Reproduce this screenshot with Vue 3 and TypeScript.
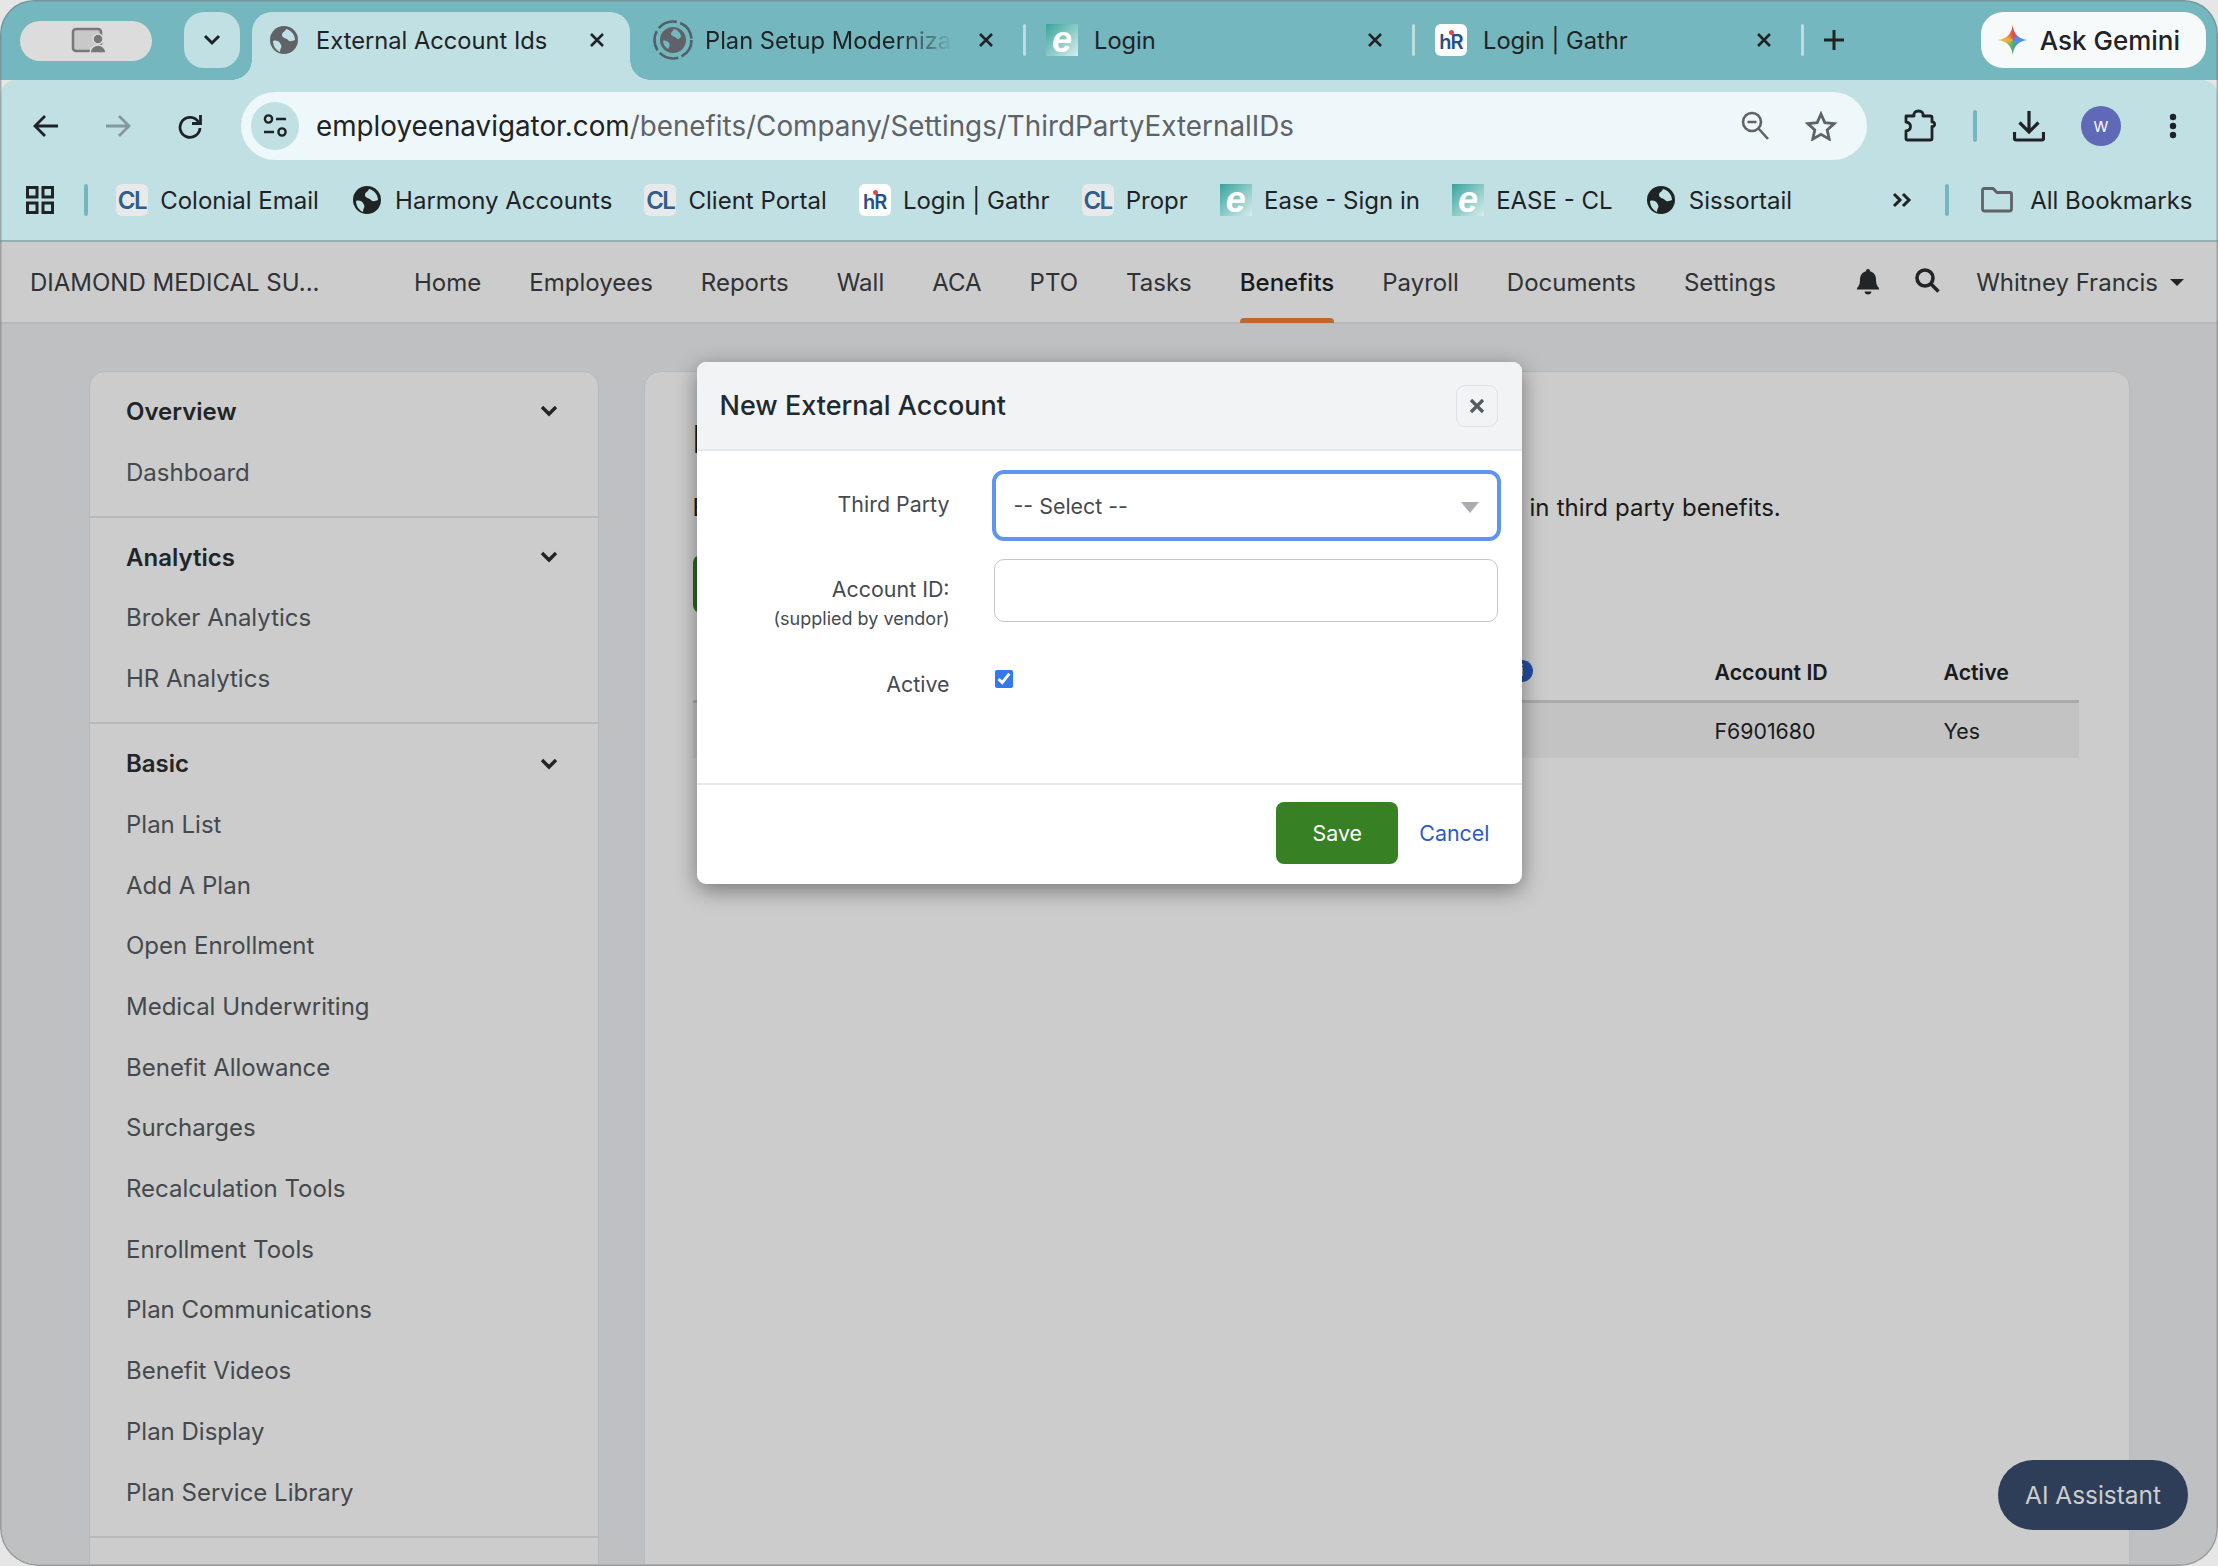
<script setup lang="ts">
type IconKind = 'globe' | 'ring' | 'cl' | 'hr' | 'ease'

interface BrowserTab {
  title: string
  icon: IconKind
  active?: boolean
  fade?: boolean
  sep?: boolean
}

interface Bookmark {
  title: string
  icon: IconKind
}

interface SideSection {
  title: string
  items: string[]
}

const tabs: BrowserTab[] = [
  { title: 'External Account Ids', icon: 'globe', active: true },
  { title: 'Plan Setup Modernization', icon: 'ring', fade: true, sep: true },
  { title: 'Login', icon: 'ease', sep: true },
  { title: 'Login | Gathr', icon: 'hr', sep: true },
]

const bookmarks: Bookmark[] = [
  { title: 'Colonial Email', icon: 'cl' },
  { title: 'Harmony Accounts', icon: 'globe' },
  { title: 'Client Portal', icon: 'cl' },
  { title: 'Login | Gathr', icon: 'hr' },
  { title: 'Propr', icon: 'cl' },
  { title: 'Ease - Sign in', icon: 'ease' },
  { title: 'EASE - CL', icon: 'ease' },
  { title: 'Sissortail', icon: 'globe' },
]

const navItems = ['Home', 'Employees', 'Reports', 'Wall', 'ACA', 'PTO', 'Tasks', 'Benefits', 'Payroll', 'Documents', 'Settings']

const sections: SideSection[] = [
  { title: 'Overview', items: ['Dashboard'] },
  { title: 'Analytics', items: ['Broker Analytics', 'HR Analytics'] },
  {
    title: 'Basic',
    items: [
      'Plan List',
      'Add A Plan',
      'Open Enrollment',
      'Medical Underwriting',
      'Benefit Allowance',
      'Surcharges',
      'Recalculation Tools',
      'Enrollment Tools',
      'Plan Communications',
      'Benefit Videos',
      'Plan Display',
      'Plan Service Library',
    ],
  },
]
</script>

<template>
  <div class="window">
    <!-- tab strip -->
    <header class="tabstrip">
      <div class="profile-pill">
        <svg class="pill-icon" width="36" height="28" viewBox="0 0 36 28" fill="none">
          <rect x="2" y="2" width="28" height="22" rx="3" fill="#c8c8c8" stroke="#777" stroke-width="2.5" />
          <circle cx="27" cy="12" r="5" fill="#777" stroke="#dcdcdc" stroke-width="1.5" />
          <path d="M19 26c0-5 4-8 8-8s8 3 8 8z" fill="#777" stroke="#dcdcdc" stroke-width="1.5" />
        </svg>
      </div>
      <div class="tab-search">
        <svg width="18" height="12" viewBox="0 0 18 12" fill="none"><path d="M2 2l7 7 7-7" stroke="#1f2325" stroke-width="3" /></svg>
      </div>
      <div class="tabs">
        <template v-for="tab in tabs" :key="tab.title">
          <div class="tab" :class="{ 'tab--active': tab.active }">
            <span class="fav">
              <svg v-if="tab.icon === 'globe'" width="28" height="28" viewBox="0 0 28 28">
                <circle cx="14" cy="14" r="14" fill="#5f6368" />
                <path d="M16 3c-1 3-4 3-4 6s4 3 6 5 4 1 7 0c0-5-4-10-9-11zM3 15c3-1 6 0 7 2s2 3 1 5-1 3-1 4c-4-2-7-6-7-11z" fill="#c1e0e3" />
              </svg>
              <svg v-else-if="tab.icon === 'ring'" class="ring" width="40" height="40" viewBox="0 0 40 40">
                <circle cx="20" cy="20" r="18.5" fill="none" stroke="#4f6268" stroke-width="2.6" stroke-dasharray="20 3.5" />
                <circle cx="20" cy="20" r="13" fill="#5f6368" />
                <path d="M21 9c-1 2-3 3-3 5s3 2 5 4 3 1 5-1c0-4-3-7-7-8zM10 21c2-1 5 0 6 2s1 2 0 4l-1 2c-3-2-5-5-5-8z" fill="#74b7bf" />
              </svg>
              <span v-else-if="tab.icon === 'ease'" class="logo logo--ease">e</span>
              <span v-else class="logo logo--hr">hR<i class="hr-dot" /></span>
            </span>
            <span class="tab-title" :class="{ 'tab-title--fade': tab.fade }">{{ tab.title }}</span>
            <svg class="tab-close" width="16" height="16" viewBox="0 0 16 16" fill="none">
              <path d="M2 2l12 12M14 2L2 14" stroke="#1f2325" stroke-width="2.6" />
            </svg>
          </div>
          <span v-if="tab.sep" class="tab-sep" />
        </template>
      </div>
      <svg class="tab-plus" width="22" height="22" viewBox="0 0 22 22" fill="none">
        <path d="M11 1v20M1 11h20" stroke="#1f2325" stroke-width="3" />
      </svg>
      <div class="gemini">
        <span class="gemini-star" />
        <span>Ask Gemini</span>
      </div>
    </header>

    <!-- address bar -->
    <div class="toolbar">
      <svg width="26" height="24" viewBox="0 0 26 24" fill="none">
        <path d="M25 12H3M12 2L2 12l10 10" stroke="#1f2325" stroke-width="2.8" />
      </svg>
      <svg class="tool-fwd" width="26" height="24" viewBox="0 0 26 24" fill="none">
        <path d="M1 12h22M14 2l10 10-10 10" stroke="#84989d" stroke-width="2.8" />
      </svg>
      <svg class="tool-reload" width="26" height="26" viewBox="0 0 26 26" fill="none">
        <path d="M21.5 9A10 10 0 1 0 23 15" stroke="#1f2325" stroke-width="2.8" />
        <path d="M23.5 2v8.5H15" stroke="#1f2325" stroke-width="2.8" />
      </svg>
      <div class="omnibox">
        <span class="site-chip">
          <svg width="24" height="24" viewBox="0 0 24 24" fill="none" stroke="#1f2325" stroke-width="2.4">
            <circle cx="5.5" cy="5" r="3.6" />
            <path d="M13 5h10M1 18h10" />
            <circle cx="19" cy="18" r="3.6" />
          </svg>
        </span>
        <span class="url"><b>employeenavigator.com</b>/benefits/Company/Settings/ThirdPartyExternalIDs</span>
        <svg class="omni-zoom" width="28" height="30" viewBox="0 0 28 30" fill="none" stroke="#5f6368" stroke-width="2.6">
          <circle cx="11" cy="11" r="9" />
          <path d="M6.5 11h9M17.5 17.5L27 28" />
        </svg>
        <svg class="omni-star" width="32" height="30" viewBox="0 0 32 30" fill="none">
          <path d="M16 3l3.8 8.6 9.4 1-7 6.3 2 9.2L16 23.4 7.8 28.1l2-9.2-7-6.3 9.4-1z" stroke="#5f6368" stroke-width="2.8" />
        </svg>
      </div>
      <svg class="tool-ext" width="34" height="34" viewBox="0 0 34 34" fill="none">
        <path d="M3 7h8c-.5-3 1-5 4.5-5S20.500 4 20 7h7.500c1 0 1.500.5 1.500 1.500V13c3.500-.5 3.500 5 0 4.500v12c0 1-.5 1.500-1.500 1.500h-23C3.500 31 3 30.500 3 29.500V22c3-.5 4.500-2 4.500-4.500S6 13.500 3 13V8c0-.5 0-1 0-1z" stroke="#1f2325" stroke-width="2.8" stroke-linejoin="round" />
      </svg>
      <span class="bar-sep tool-sep" />
      <svg class="tool-dl" width="32" height="32" viewBox="0 0 32 32" fill="none">
        <path d="M16 1v20M6.500 12.500L16 22l9.500-9.500" stroke="#1f2325" stroke-width="3.2" />
        <path d="M1.500 22v6.500a1.500 1.500 0 0 0 1.500 1.500h26a1.500 1.500 0 0 0 1.500-1.500V22" stroke="#1f2325" stroke-width="3.2" />
      </svg>
      <span class="avatar">W</span>
      <svg class="tool-dots" width="8" height="26" viewBox="0 0 8 26" fill="#1f2325">
        <circle cx="4" cy="4" r="3.2" /><circle cx="4" cy="13" r="3.2" /><circle cx="4" cy="22" r="3.2" />
      </svg>
    </div>

    <!-- bookmarks -->
    <div class="bookmarks">
      <svg width="28" height="28" viewBox="0 0 28 28" fill="none" stroke="#1f2325" stroke-width="3">
        <rect x="1.5" y="1.5" width="9.5" height="9.5" />
        <rect x="17" y="1.5" width="9.5" height="9.5" />
        <rect x="1.5" y="17" width="9.5" height="9.5" />
        <rect x="17" y="17" width="9.5" height="9.5" />
      </svg>
      <span class="bar-sep bm-sep" />
      <div v-for="bm in bookmarks" :key="bm.title" class="bm">
        <span class="fav">
          <svg v-if="bm.icon === 'globe'" width="28" height="28" viewBox="0 0 28 28">
            <circle cx="14" cy="14" r="14" fill="#1f2325" />
            <path d="M16 3c-1 3-4 3-4 6s4 3 6 5 4 1 7 0c0-5-4-10-9-11zM3 15c3-1 6 0 7 2s2 3 1 5-1 3-1 4c-4-2-7-6-7-11z" fill="#c1e0e3" />
          </svg>
          <span v-else-if="bm.icon === 'cl'" class="logo logo--cl">CL</span>
          <span v-else-if="bm.icon === 'ease'" class="logo logo--ease">e</span>
          <span v-else class="logo logo--hr">hR<i class="hr-dot" /></span>
        </span>
        <span>{{ bm.title }}</span>
      </div>
      <svg class="bm-more" width="20" height="16" viewBox="0 0 20 16" fill="none" stroke="#1f2325" stroke-width="3">
        <path d="M2 2l6 6-6 6M11 2l6 6-6 6" />
      </svg>
      <span class="bar-sep bm-sep2" />
      <div class="bm bm-all">
        <svg width="32" height="26" viewBox="0 0 32 26" fill="none">
          <path d="M1.500 3a1.500 1.500 0 0 1 1.500-1.500h9l4 4h13a1.500 1.500 0 0 1 1.500 1.500v15a2 2 0 0 1-2 2H3.500a2 2 0 0 1-2-2z" stroke="#5f6368" stroke-width="2.8" />
        </svg>
        <span>All Bookmarks</span>
      </div>
    </div>

    <!-- page -->
    <div class="page">
      <nav class="topnav">
        <div class="company">DIAMOND MEDICAL SU...</div>
        <div class="nav-links">
          <span v-for="item in navItems" :key="item" class="nav-link" :class="{ 'nav-link--on': item === 'Benefits' }">{{ item }}</span>
        </div>
        <div class="nav-right">
          <svg width="22" height="26" viewBox="0 0 22 26" fill="#2a2f31">
            <path d="M11 0c1.300 0 2 .8 2 2.200 4 1 6 4.200 6 8.300 0 4.500 1 6.500 3 8.500v1.500H0V19c2-2 3-4 3-8.500 0-4.100 2-7.300 6-8.300C9 .8 9.700 0 11 0zM7.500 22.500h7C14.300 24.500 13 25.500 11 25.500s-3.300-1-3.500-3z" />
          </svg>
          <svg class="nav-search" width="25" height="25" viewBox="0 0 25 25" fill="none" stroke="#2a2f31" stroke-width="3.6">
            <circle cx="10" cy="10" r="8" />
            <path d="M16 16l7.500 7.500" />
          </svg>
          <span class="nav-user">Whitney Francis</span>
          <span class="nav-caret" />
        </div>
      </nav>

      <div class="content">
        <aside class="sidebar">
          <section v-for="sec in sections" :key="sec.title" class="side-sec">
            <div class="side-row side-head">
              <span>{{ sec.title }}</span>
              <svg width="18" height="12" viewBox="0 0 18 12" fill="none"><path d="M2 2l7 7 7-7" stroke="#2a2f31" stroke-width="3.4" /></svg>
            </div>
            <div v-for="item in sec.items" :key="item" class="side-row">{{ item }}</div>
          </section>
          <section class="side-sec" />
        </aside>

        <main class="main">
          <h1 class="main-title">External Account IDs</h1>
          <p class="main-desc">External Account IDs identify the employees of your company who enroll in third party benefits.</p>
          <button class="main-btn">New External Account</button>
          <div class="table-head">
            <div class="th-first">
              <span>Third Party</span>
              <span class="info">i</span>
            </div>
            <div>Account ID</div>
            <div>Active</div>
          </div>
          <div class="table-row">
            <div />
            <div>F6901680</div>
            <div>Yes</div>
          </div>
        </main>
      </div>

      <div class="backdrop">
        <div class="modal">
          <div class="modal-head">
            <span class="modal-title">New External Account</span>
            <button class="modal-x">
              <svg width="16" height="16" viewBox="0 0 16 16" fill="none"><path d="M2 2l12 12M14 2L2 14" stroke="#555a5e" stroke-width="3.2" /></svg>
            </button>
          </div>
          <div class="modal-body">
            <label class="lbl lbl--first">Third Party</label>
            <div class="select-wrap">
              <select class="select">
                <option>-- Select --</option>
              </select>
              <span class="select-caret" />
            </div>
            <label class="lbl lbl--acct">
              Account ID:
              <small>(supplied by vendor)</small>
            </label>
            <input class="input" type="text" />
            <label class="lbl lbl--active">Active</label>
            <input class="check" type="checkbox" checked />
          </div>
          <div class="modal-foot">
            <button class="save">Save</button>
            <span class="cancel">Cancel</span>
          </div>
        </div>
      </div>

      <button class="assistant">AI Assistant</button>
    </div>
  </div>
</template>

<style>
html,
body {
  margin: 0;
  background: #e6e6e6;
}
</style>

<style scoped>
.window {
  position: relative;
  width: 2218px;
  height: 1566px;
  overflow: hidden;
  border-radius: 34px 34px 38px 38px;
  font-family: Inter, 'Liberation Sans', sans-serif;
  color: #1f2325;
}

.window::after {
  content: '';
  position: absolute;
  inset: 0;
  border-radius: inherit;
  box-shadow: inset 0 0 0 1.5px rgba(120, 125, 128, 0.55);
  pointer-events: none;
  z-index: 5;
}

.tabstrip {
  display: flex;
  align-items: flex-start;
  height: 80px;
  box-sizing: border-box;
  padding: 12px 12px 0 20px;
  background: #74b7bf;
}

.profile-pill {
  display: flex;
  align-items: center;
  justify-content: center;
  width: 132px;
  height: 40px;
  margin-top: 9px;
  border-radius: 20px;
  background: #dcdcdc;
}

.pill-icon {
  margin-left: 5px;
}

.tab-search {
  display: flex;
  align-items: center;
  justify-content: center;
  width: 56px;
  height: 56px;
  margin-left: 32px;
  border-radius: 20px;
  background: #c1e0e3;
}

.tabs {
  display: flex;
  align-items: flex-start;
  margin-left: 12px;
}

.tab {
  position: relative;
  display: flex;
  align-items: center;
  width: 378px;
  height: 68px;
  box-sizing: border-box;
  padding: 0 25px 12px 16px;
  font-size: 23.7px;
  white-space: nowrap;
}

.tab--active {
  margin-right: 11px;
  background: #c1e0e3;
  border-radius: 20px 20px 0 0;
}

.tab--active::before,
.tab--active::after {
  content: '';
  position: absolute;
  bottom: 0;
  width: 20px;
  height: 20px;
}

.tab--active::before {
  left: -20px;
  background: radial-gradient(circle at 0 0, transparent 19.5px, #c1e0e3 20px);
}

.tab--active::after {
  right: -20px;
  background: radial-gradient(circle at 100% 0, transparent 19.5px, #c1e0e3 20px);
}

.tab-sep {
  flex: none;
  width: 3px;
  height: 32px;
  margin: 12px 4px 0;
  border-radius: 2px;
  background: #bcdcdf;
}

.fav {
  display: flex;
  flex: none;
  align-items: center;
  justify-content: center;
  width: 32px;
  height: 32px;
}

.ring {
  flex: none;
}

.tab-title {
  overflow: hidden;
  width: 248px;
  margin-left: 16px;
}

.tab-title--fade {
  -webkit-mask-image: linear-gradient(90deg, #000 78%, transparent 100%);
  mask-image: linear-gradient(90deg, #000 78%, transparent 100%);
}

.tab-close {
  flex: none;
  margin-left: auto;
}

.tab-plus {
  margin: 17px 0 0 15px;
}

.gemini {
  display: flex;
  align-items: center;
  gap: 12px;
  height: 56px;
  margin-left: auto;
  padding: 0 26px 0 17px;
  border-radius: 22px;
  background: #f6fafb;
  font-size: 26px;
  font-weight: 500;
}

.gemini-star {
  width: 30px;
  height: 30px;
  background: conic-gradient(from 0deg, #df4f45, #4f8df5 22%, #4f8df5 30%, #4cae6e 50%, #f2b53a 75%, #df4f45);
  clip-path: path('M15 0C16 9 21 14 30 15C21 16 16 21 15 30C14 21 9 16 0 15C9 14 14 9 15 0Z');
}

.toolbar {
  display: flex;
  align-items: center;
  height: 80px;
  box-sizing: border-box;
  padding: 12px 0 0 33px;
  border-radius: 16px 16px 0 0;
  background: #c1e0e3;
}

.tool-fwd,
.tool-reload {
  margin-left: 46px;
}

.omnibox {
  display: flex;
  align-items: center;
  width: 1626px;
  height: 68px;
  box-sizing: border-box;
  margin-left: 38px;
  padding: 0 30px 0 10px;
  border-radius: 34px;
  background: #eef7f9;
}

.site-chip {
  display: flex;
  flex: none;
  align-items: center;
  justify-content: center;
  width: 48px;
  height: 48px;
  border-radius: 50%;
  background: #c1e0e3;
}

.url {
  margin-left: 17px;
  font-size: 27.8px;
  color: #5f6368;
  white-space: nowrap;
}

.url b {
  font-weight: 400;
  color: #1f2325;
}

.omni-zoom {
  margin-left: auto;
}

.omni-star,
.tool-ext,
.tool-sep,
.tool-dl,
.avatar {
  margin-left: 36px;
}

.bar-sep {
  flex: none;
  width: 4px;
  height: 32px;
  border-radius: 2px;
  background: #74b7bf;
}

.avatar {
  display: flex;
  flex: none;
  align-items: center;
  justify-content: center;
  width: 40px;
  height: 40px;
  border-radius: 50%;
  background: #5f69b8;
  color: #fff;
  font-size: 15px;
}

.tool-dots {
  margin-left: 48px;
}

.bookmarks {
  display: flex;
  align-items: center;
  height: 80px;
  box-sizing: border-box;
  padding-left: 26px;
  background: #c1e0e3;
  font-size: 24px;
  white-space: nowrap;
}

.bm-sep {
  margin: 0 28px 0 30px;
}

.bm {
  display: flex;
  align-items: center;
  gap: 12.2px;
  margin-right: 32px;
}

.logo {
  position: relative;
  display: flex;
  align-items: center;
  justify-content: center;
  overflow: hidden;
  width: 32px;
  height: 32px;
  border-radius: 6px;
}

.logo--cl {
  background: #e8e9ea;
  color: #2f5d8c;
  font-size: 24px;
  font-weight: 600;
  letter-spacing: -1.5px;
}

.logo--hr {
  box-sizing: border-box;
  padding-top: 4px;
  background: #fff;
  color: #24508a;
  font-size: 20px;
  font-weight: 600;
  letter-spacing: -1px;
}

.hr-dot {
  position: absolute;
  top: 6px;
  left: 14px;
  width: 5px;
  height: 5px;
  border-radius: 50%;
  background: #e0474c;
}

.logo--ease {
  border-radius: 0;
  background: linear-gradient(135deg, #3aa39c, #d6eeee);
  color: #fff;
  font-family: 'Liberation Sans', sans-serif;
  font-size: 36px;
  font-style: italic;
  font-weight: 700;
  line-height: 28px;
}

.bm-more {
  margin-left: 68px;
}

.bm-sep2 {
  margin: 0 32px 0 33px;
}

.bm-all {
  gap: 17px;
  margin-right: 0;
}

.page {
  position: relative;
  height: 1326px;
  background: #eff0f2;
  color: #3b4043;
}

.topnav {
  display: flex;
  align-items: center;
  height: 84px;
  box-sizing: border-box;
  border-top: 2px solid #b8dde2;
  border-bottom: 2px solid #e4e6e9;
  background: #fff;
  font-size: 24px;
}

.company {
  flex: none;
  width: 414px;
  box-sizing: border-box;
  padding-left: 30px;
}

.nav-links {
  display: flex;
  gap: 48px;
  height: 100%;
  align-items: center;
}

.nav-link {
  position: relative;
}

.nav-link--on {
  font-weight: 500;
  color: #1f2325;
}

.nav-link--on::after {
  content: '';
  position: absolute;
  left: 0;
  right: 0;
  bottom: -26px;
  height: 5px;
  border-radius: 4px 4px 0 0;
  background: #f0803c;
}

.nav-right {
  display: flex;
  align-items: center;
  margin-left: auto;
  padding-right: 34px;
}

.nav-search {
  margin: -3px 0 0 36px;
}

.nav-user {
  margin-left: 36px;
}

.nav-caret {
  width: 0;
  height: 0;
  margin-left: 12px;
  border-top: 7px solid #2a2f31;
  border-left: 7px solid transparent;
  border-right: 7px solid transparent;
}

.content {
  display: flex;
  align-items: flex-start;
  gap: 45px;
  box-sizing: border-box;
  height: 1240px;
  padding: 47px 88px 0 89px;
  overflow: hidden;
}

.sidebar,
.main {
  box-sizing: border-box;
  min-height: 1300px;
  border: 1.5px solid #e6e8ea;
  border-radius: 16px;
  background: #fff;
}

.sidebar {
  flex: none;
  width: 510px;
  color: #565c61;
  font-size: 24px;
}

.side-sec {
  padding: 9px 36px 13.5px;
  border-bottom: 2px solid #e6e8ea;
}

.side-sec:last-child {
  border-bottom: 0;
}

.side-row {
  display: flex;
  align-items: center;
  justify-content: space-between;
  height: 60.7px;
}

.side-head {
  font-weight: 600;
  color: #2a2f31;
}

.side-head svg {
  margin-right: 4px;
}

.main {
  flex: 1;
  padding: 42px 50px 0 47.5px;
  color: #1f2325;
  font-size: 24px;
}

.main-title {
  margin: 0 0 27px;
  font-size: 38px;
  font-weight: 600;
  line-height: 50px;
}

.main-desc {
  margin: 0 0 30px;
  line-height: 34px;
  word-spacing: 0.5px;
  white-space: nowrap;
}

.main-btn {
  display: block;
  height: 58px;
  padding: 0 30px;
  border: 0;
  border-radius: 8px;
  background: #388024;
  color: #fff;
  font: inherit;
}

.table-head,
.table-row {
  display: grid;
  grid-template-columns: 1022px 229px 1fr;
  font-size: 21.3px;
}

.table-head {
  align-items: start;
  height: 45px;
  padding-top: 42px;
  border-bottom: 3px solid #d4d7da;
  font-weight: 600;
  line-height: 34px;
}

.th-first {
  display: flex;
  align-items: center;
  justify-content: space-between;
  padding: 0 182px 0 6px;
}

.info {
  display: flex;
  align-items: center;
  justify-content: center;
  width: 22px;
  height: 22px;
  margin-top: -3px;
  border-radius: 50%;
  background: #2d63c8;
  color: #fff;
  font-size: 15px;
  font-weight: 700;
}

.table-row {
  align-items: center;
  height: 55px;
  background: #f4f4f4;
}

.backdrop {
  position: absolute;
  inset: 0;
  display: flex;
  justify-content: center;
  align-items: flex-start;
  padding-top: 122px;
  background: rgba(0, 0, 0, 0.2);
}

.modal {
  display: flex;
  flex-direction: column;
  width: 825px;
  height: 522px;
  border-radius: 9px;
  overflow: hidden;
  background: #fff;
  box-shadow: 0 6px 22px rgba(0, 0, 0, 0.42);
}

.modal-head {
  display: flex;
  flex: none;
  align-items: center;
  justify-content: space-between;
  height: 89px;
  box-sizing: border-box;
  padding: 0 24px 0 23px;
  border-bottom: 2px solid #e6e8ea;
  background: #f1f3f5;
}

.modal-title {
  margin-top: -1px;
  font-size: 27px;
  font-weight: 500;
  color: #1f2a2e;
}

.modal-x {
  display: flex;
  align-items: center;
  justify-content: center;
  width: 42px;
  height: 42px;
  padding: 0;
  border: 1.5px solid #dfe1e4;
  border-radius: 9px;
  background: transparent;
}

.modal-body {
  display: grid;
  flex: 1;
  grid-template-columns: 253px 509px;
  column-gap: 42px;
  row-gap: 18px;
  align-content: start;
  padding-top: 19px;
  color: #454b50;
  font-size: 21.4px;
}

.lbl {
  display: block;
  line-height: 34px;
  text-align: right;
}

.lbl--first {
  padding-top: 17px;
}

.lbl--acct {
  padding-top: 13px;
}

.lbl small {
  display: block;
  font-size: 18px;
  line-height: 26px;
}

.lbl--active {
  margin-top: 17px;
}

.select-wrap {
  position: relative;
  height: 71px;
}

.select {
  width: 100%;
  height: 100%;
  box-sizing: border-box;
  padding: 0 0 0 18px;
  border: 4px solid #5f95f0;
  border-radius: 12px;
  outline: 0;
  appearance: none;
  background: #fff;
  color: #454b50;
  font: inherit;
}

.select-caret {
  position: absolute;
  top: 32px;
  right: 22px;
  width: 0;
  height: 0;
  border-top: 11px solid #aaadb0;
  border-left: 9px solid transparent;
  border-right: 9px solid transparent;
}

.input {
  width: 504px;
  height: 63px;
  box-sizing: border-box;
  margin-left: 2px;
  border: 1.5px solid #c3c6ca;
  border-radius: 10px;
  background: #fff;
}

.check {
  width: 18px;
  height: 18px;
  margin: 20px 0 0 3px;
  accent-color: #3478f0;
}

.modal-foot {
  display: flex;
  flex: none;
  align-items: center;
  justify-content: flex-end;
  gap: 21px;
  height: 101px;
  box-sizing: border-box;
  padding: 0 32px 4px 0;
  border-top: 2px solid #e6e8ea;
}

.save {
  width: 122px;
  height: 62px;
  border: 0;
  border-radius: 8px;
  background: #388024;
  color: #fff;
  font: inherit;
  font-size: 21.4px;
}

.cancel {
  color: #2a5cc4;
  font-size: 21.4px;
}

.assistant {
  position: absolute;
  left: 1998px;
  top: 1220px;
  width: 190px;
  height: 70px;
  border: 0;
  border-radius: 35px;
  background: #2f3e58;
  color: #cdcdcd;
  font: inherit;
  font-size: 24.4px;
}
</style>
